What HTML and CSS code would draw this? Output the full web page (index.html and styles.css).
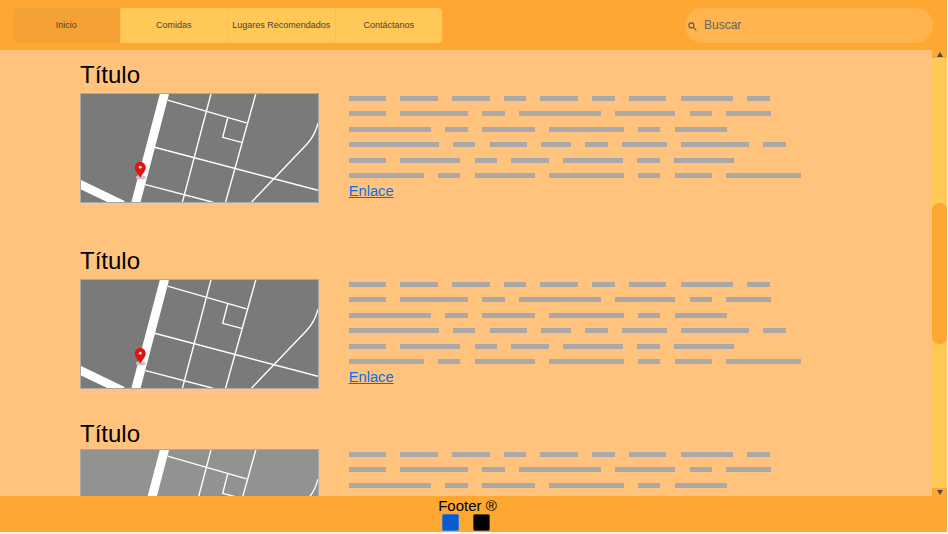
FILE: index.html
```html
<!DOCTYPE html>
<html lang="es">
<head>
<meta charset="utf-8">
<title>Inicio</title>
<link rel="stylesheet" href="styles.css">
</head>
<body>
<svg class="defs" width="0" height="0" aria-hidden="true">
  <symbol id="map" viewBox="0 0 238 108">
    <g class="thin">
      <path d="M87 6 166.300 28.700"/>
      <path d="M175.700 -1 145 109"/>
      <path d="M130.700 -1 101.700 109"/>
      <path d="M73 53 238 96.500"/>
      <path d="M63 90.300 132.500 108.500"/>
      <path d="M147.300 23.700 142.300 43.300 161.300 48.300"/>
      <path d="M170.700 109 227 50Q235 41 238 29"/>
    </g>
    <g class="thick">
      <path class="main-road" d="M84 -1 55 109"/>
      <path class="side-road" d="M-2 90 42 111"/>
    </g>
    <ellipse class="pin-shadow" cx="60" cy="83.500" rx="5" ry="2"/>
    <path class="pin" d="M59.500 84C57.700 80.500 54 77.500 54 73.400A5.500 5.500 0 0 1 65 73.400C65 77.500 61.300 80.500 59.500 84Z"/>
    <circle class="pin-dot" cx="59.500" cy="73.400" r="1.500"/>
  </symbol>
</svg>
<div class="page">
  <header class="top">
    <nav class="tabs">
      <a class="tab active">Inicio</a>
      <a class="tab">Comidas</a>
      <a class="tab">Lugares Recomendados</a>
      <a class="tab">Contáctanos</a>
    </nav>
    <div class="search">
      <svg class="search-icon" viewBox="0 0 9 9"><circle cx="3.400" cy="3.400" r="2.500"/><path d="M5.300 5.300 8.300 8.300"/></svg>
      <span>Buscar</span>
    </div>
  </header>
  <div class="middle">
    <main class="content">
      <article class="item">
        <h2>Título</h2>
        <div class="item-body">
          <svg class="map"><use href="#map"/></svg>
          <div class="text">
            <div class="row"><i class="u5"></i><i class="u5"></i><i class="u5"></i><i class="u3"></i><i class="u5"></i><i class="u3"></i><i class="u5"></i><i class="u7"></i><i class="u3"></i></div>
            <div class="row"><i class="u5"></i><i class="u9"></i><i class="u3"></i><i class="u11"></i><i class="u8"></i><i class="u3"></i><i class="u6"></i></div>
            <div class="row"><i class="u11"></i><i class="u3"></i><i class="u7"></i><i class="u10"></i><i class="u3"></i><i class="u7"></i></div>
            <div class="row"><i class="u12"></i><i class="u3"></i><i class="u5"></i><i class="u4"></i><i class="u3"></i><i class="u6"></i><i class="u9"></i><i class="u3"></i></div>
            <div class="row"><i class="u5"></i><i class="u8"></i><i class="u3"></i><i class="u5"></i><i class="u8"></i><i class="u3"></i><i class="u8"></i></div>
            <div class="row"><i class="u10"></i><i class="u3"></i><i class="u8"></i><i class="u10"></i><i class="u3"></i><i class="u5"></i><i class="u10"></i></div>
            <a class="link" href="#">Enlace</a>
          </div>
        </div>
      </article>
      <article class="item">
        <h2>Título</h2>
        <div class="item-body">
          <svg class="map"><use href="#map"/></svg>
          <div class="text">
            <div class="row"><i class="u5"></i><i class="u5"></i><i class="u5"></i><i class="u3"></i><i class="u5"></i><i class="u3"></i><i class="u5"></i><i class="u7"></i><i class="u3"></i></div>
            <div class="row"><i class="u5"></i><i class="u9"></i><i class="u3"></i><i class="u11"></i><i class="u8"></i><i class="u3"></i><i class="u6"></i></div>
            <div class="row"><i class="u11"></i><i class="u3"></i><i class="u7"></i><i class="u10"></i><i class="u3"></i><i class="u7"></i></div>
            <div class="row"><i class="u12"></i><i class="u3"></i><i class="u5"></i><i class="u4"></i><i class="u3"></i><i class="u6"></i><i class="u9"></i><i class="u3"></i></div>
            <div class="row"><i class="u5"></i><i class="u8"></i><i class="u3"></i><i class="u5"></i><i class="u8"></i><i class="u3"></i><i class="u8"></i></div>
            <div class="row"><i class="u10"></i><i class="u3"></i><i class="u8"></i><i class="u10"></i><i class="u3"></i><i class="u5"></i><i class="u10"></i></div>
            <a class="link" href="#">Enlace</a>
          </div>
        </div>
      </article>
      <article class="item last">
        <h2>Título</h2>
        <div class="item-body">
          <svg class="map light"><use href="#map"/></svg>
          <div class="text">
            <div class="row"><i class="u5"></i><i class="u5"></i><i class="u5"></i><i class="u3"></i><i class="u5"></i><i class="u3"></i><i class="u5"></i><i class="u7"></i><i class="u3"></i></div>
            <div class="row"><i class="u5"></i><i class="u9"></i><i class="u3"></i><i class="u11"></i><i class="u8"></i><i class="u3"></i><i class="u6"></i></div>
            <div class="row"><i class="u11"></i><i class="u3"></i><i class="u7"></i><i class="u10"></i><i class="u3"></i><i class="u7"></i></div>
          </div>
        </div>
      </article>
    </main>
    <aside class="scrollbar">
      <div class="arrow"><span class="tri up"></span></div>
      <div class="track"><div class="thumb"></div></div>
      <div class="arrow"><span class="tri down"></span></div>
    </aside>
  </div>
  <footer class="bottom">
    <div class="foot-text">Footer ®</div>
    <div class="foot-icons"><span class="sq blue"></span><span class="sq black"></span></div>
  </footer>
</div>
</body>
</html>
```
FILE: styles.css
```css
* { box-sizing: border-box; }
html, body { margin: 0; height: 100%; overflow: hidden; }
body { background: #f6f3ee; font-family: "Liberation Sans", Arial, sans-serif; color: #000; }
.defs { position: absolute; }
.page { width: 947px; height: 532px; display: flex; flex-direction: column; background: #ffa733; }

.top { height: 50px; flex: none; display: flex; justify-content: space-between; align-items: flex-start; padding: 8px 14px 0 13px; background: #ffa733; }
.tabs { display: flex; width: 429px; height: 35px; border-radius: 4px; overflow: hidden; background: #ffc857; }
.tab { flex: 1; display: flex; align-items: center; justify-content: center; padding-bottom: 2px; font-size: 9px; color: #4a4433; border-left: 1px solid #f9bf52; white-space: nowrap; }
.tab:first-child { border-left: 0; }
.tab.active { background: #f4a233; }
.search { width: 248px; height: 35px; border-radius: 17.500px; background: #ffb44e; display: flex; align-items: center; padding: 0 0 1px 3px; gap: 7px; font-size: 12px; color: #666; }
.search-icon { width: 9px; height: 9px; margin-top: 2px; fill: none; stroke: #555; stroke-width: 1.100; }

.middle { flex: 1; min-height: 0; display: flex; }
.content { flex: 1; min-width: 0; overflow: hidden; background: #ffc37d; padding: 9px 0 0 80px; }
.item { margin-bottom: 42px; }
.item.last { margin-bottom: 0; margin-top: -13px; }
.item.last h2 { margin-bottom: 0; }
h2 { margin: 0 0 3px; font-size: 24px; line-height: 31px; font-weight: 400; }
.item-body { display: flex; gap: 29.700px; align-items: flex-start; }
.map { display: block; flex: none; width: 239px; height: 110px; padding: 0; border: 1px solid #a9a9a9; background: #7a7a7a; }
.map.light { background: #929292; }
.thin path { fill: none; stroke: #fff; stroke-width: 1.400; }
.thick path { fill: none; stroke: #fff; }
.main-road { stroke-width: 9; }
.side-road { stroke-width: 8.500; }
.pin { fill: #e01313; }
.pin-dot { fill: #d4d4d4; }
.pin-shadow { fill: #c4c4c4; }

.text { padding-top: 3px; }
.row { display: flex; gap: 14.200px; height: 5px; margin-bottom: 10.400px; }
.row i { display: block; height: 5px; background: #aaa9a8; }
.u3 { width: 22.500px; }
.u4 { width: 30px; }
.u5 { width: 37.500px; }
.u6 { width: 45px; }
.u7 { width: 52.500px; }
.u8 { width: 60px; }
.u9 { width: 67.500px; }
.u10 { width: 75px; }
.u11 { width: 82.500px; }
.u12 { width: 90px; }
.link { display: block; margin-top: -5px; font-size: 14.700px; line-height: 17px; color: #0870e8; }

.scrollbar { flex: none; width: 15px; display: flex; flex-direction: column; background: #ffc857; }
.arrow { height: 8px; flex: none; background: #ffa733; display: flex; align-items: center; justify-content: center; }
.tri { width: 0; height: 0; border-left: 3px solid transparent; border-right: 3px solid transparent; }
.tri.up { border-bottom: 5px solid #4a4a4a; }
.tri.down { border-top: 5px solid #4a4a4a; }
.track { flex: 1; min-height: 0; padding-top: 145px; }
.thumb { height: 141px; border-radius: 7px; background: #ffa733; }

.bottom { height: 36px; flex: none; background: #ffa733; display: flex; flex-direction: column; align-items: center; padding: 2px 12px 0 0; }
.foot-text { font-size: 15px; line-height: 16px; }
.foot-icons { display: flex; gap: 14px; margin: 0 3px 0 0; }
.sq { display: block; width: 17px; height: 17px; border-radius: 2px; }
.sq.blue { background: #0b5bd0; border: 1px solid #3b78c8; }
.sq.black { background: #000; border: 1px solid #5c3d10; }
```
